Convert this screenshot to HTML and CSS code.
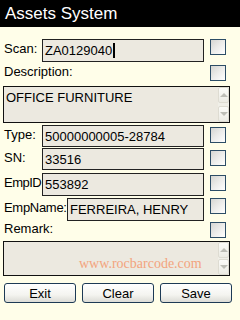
FILE: index.html
```html
<!DOCTYPE html>
<html lang="en">
<head>
    <meta charset="UTF-8">
    <meta name="viewport" content="width=device-width, initial-scale=1.0">
    <title>Assets System</title>
    <link rel="stylesheet" href="styles.css">
</head>
<body>
    <div class="titlebar">Assets System</div>

    <div class="form">
        <!-- Scan -->
        <div class="row row-scan">
            <span class="label">Scan:</span>
            <div class="field">ZA0129040<span class="caret"></span></div>
            <span class="check"></span>
        </div>

        <!-- Description -->
        <div class="row row-short row-desc">
            <span class="label label-wide">Description:</span>
            <span class="check"></span>
        </div>
        <div class="memo memo-desc">
            <div class="memo-text">OFFICE FURNITURE</div>
            <div class="scrollbar">
                <div class="scroll-btn"><span class="arrow-up"></span></div>
                <div class="scroll-track"></div>
                <div class="scroll-btn"><span class="arrow-down"></span></div>
            </div>
        </div>

        <div class="row row-type">
            <span class="label">Type:</span>
            <div class="field">50000000005-28784</div>
            <span class="check"></span>
        </div>
        <div class="row row-sn">
            <span class="label">SN:</span>
            <div class="field">33516</div>
            <span class="check"></span>
        </div>
        <div class="row row-empid">
            <span class="label label-tight">EmpID</span>
            <div class="field">553892</div>
            <span class="check"></span>
        </div>
        <div class="row row-empname">
            <span class="label label-name">EmpName:</span>
            <div class="field field-name">FERREIRA, HENRY</div>
            <span class="check"></span>
        </div>

        <!-- Remark -->
        <div class="row row-short row-remark">
            <span class="label label-wide">Remark:</span>
            <span class="check"></span>
        </div>
        <div class="memo memo-remark">
            <div class="memo-text"><span class="watermark">www.rocbarcode.com</span></div>
            <div class="scrollbar">
                <div class="scroll-btn"><span class="arrow-up"></span></div>
                <div class="scroll-track"></div>
                <div class="scroll-btn"><span class="arrow-down"></span></div>
            </div>
        </div>

        <div class="buttons">
            <button>Exit</button>
            <button>Clear</button>
            <button>Save</button>
        </div>
    </div>
</body>
</html>
```

FILE: styles.css
```css
body {
    margin: 0;
    width: 240px;
    height: 320px;
    overflow: hidden;
    background-color: #fffee9;
    font-family: "Liberation Sans", Arial, sans-serif;
    font-size: 13px;
    color: #000;
}
.titlebar {
    height: 27px;
    line-height: 27px;
    padding-left: 5px;
    background-color: #000;
    color: #fff;
    font-size: 17px;
}
.form {
    display: flex;
    flex-direction: column;
}
/* Rows: label, field, checkbox */
.row {
    display: flex;
    align-items: flex-start;
    height: 23px;
    padding-left: 4px;
}
.row-short {
    height: 16px;
}
.row-scan { margin-top: 12px; }
.row-desc { margin-top: 2px; }
.row-type { margin-top: 2px; height: 22px; }
.row-sn { margin-top: 1px; height: 22px; }
.row-empid { margin-top: 3px; }
.row-empname { margin-top: 2px; }
.row-remark { margin-top: 0; }
.label {
    width: 38px;
    padding-top: 2px;
    line-height: 15px;
    white-space: nowrap;
}
.row-short .label {
    padding-top: 0;
}
.label-wide {
    width: 202px;
}
.label-tight {
    letter-spacing: -0.5px;
}
.label-name {
    width: 63px;
    letter-spacing: -0.3px;
}
.field {
    box-sizing: border-box;
    width: 162px;
    height: 100%;
    padding-left: 2px;
    display: flex;
    align-items: center;
    border: 1px solid #222;
    background-color: #ece9e0;
    white-space: nowrap;
}
.field-name {
    width: 137px;
}
.caret {
    display: inline-block;
    width: 2px;
    height: 15px;
    margin-left: 1px;
    background-color: #000;
}
.check {
    box-sizing: border-box;
    width: 16px;
    height: 16px;
    margin-left: 6px;
    margin-top: 2px;
    border: 1px solid #2c4d66;
    background: linear-gradient(135deg, #d6d6d2 0%, #ececea 50%, #fff 100%);
}
.row-scan .check, .row-empname .check { margin-top: 0; }
.row-short .check { margin-top: 1px; }
.label-wide + .check { margin-left: 4px; }
/* Multi-line boxes */
.memo {
    box-sizing: border-box;
    display: flex;
    width: 227px;
    margin-left: 3px;
    border: 1px solid #111;
    background-color: #ece9e0;
}
.memo-desc {
    height: 37px;
    margin-top: 6px;
}
.memo-remark {
    height: 35px;
    margin-top: 4px;
}
.memo-text {
    flex: 1;
    padding: 3px 2px 0;
    line-height: 15px;
}
.watermark {
    display: block;
    margin-top: 11px;
    padding-left: 73px;
    font-family: "Liberation Serif", "Times New Roman", serif;
    font-size: 14px;
    color: #f3a47e;
}
.scrollbar {
    display: flex;
    flex-direction: column;
    width: 11px;
    background-color: #f0efe8;
}
.scroll-btn {
    box-sizing: border-box;
    height: 16px;
    display: flex;
    align-items: center;
    justify-content: center;
    border: 1px solid #dedcd2;
    border-radius: 2px;
    background: linear-gradient(#fbfbf8, #ecebe4);
}
.scroll-track {
    flex: 1;
}
.arrow-up, .arrow-down {
    width: 0;
    height: 0;
    border-left: 4px solid transparent;
    border-right: 4px solid transparent;
}
.arrow-up {
    border-bottom: 4px solid #bdbdb6;
}
.arrow-down {
    border-top: 4px solid #bdbdb6;
}
/* Buttons */
.buttons {
    display: flex;
    gap: 6px;
    margin-top: 7px;
    padding-left: 4px;
}
button {
    width: 72px;
    height: 20px;
    padding: 0;
    font-family: "Liberation Sans", Arial, sans-serif;
    font-size: 13px;
    color: #000;
    border: 1px solid #1d3a55;
    border-radius: 3px;
    background: linear-gradient(#fff 0%, #f4f4f0 60%, #dcdcd6 100%);
}
```
